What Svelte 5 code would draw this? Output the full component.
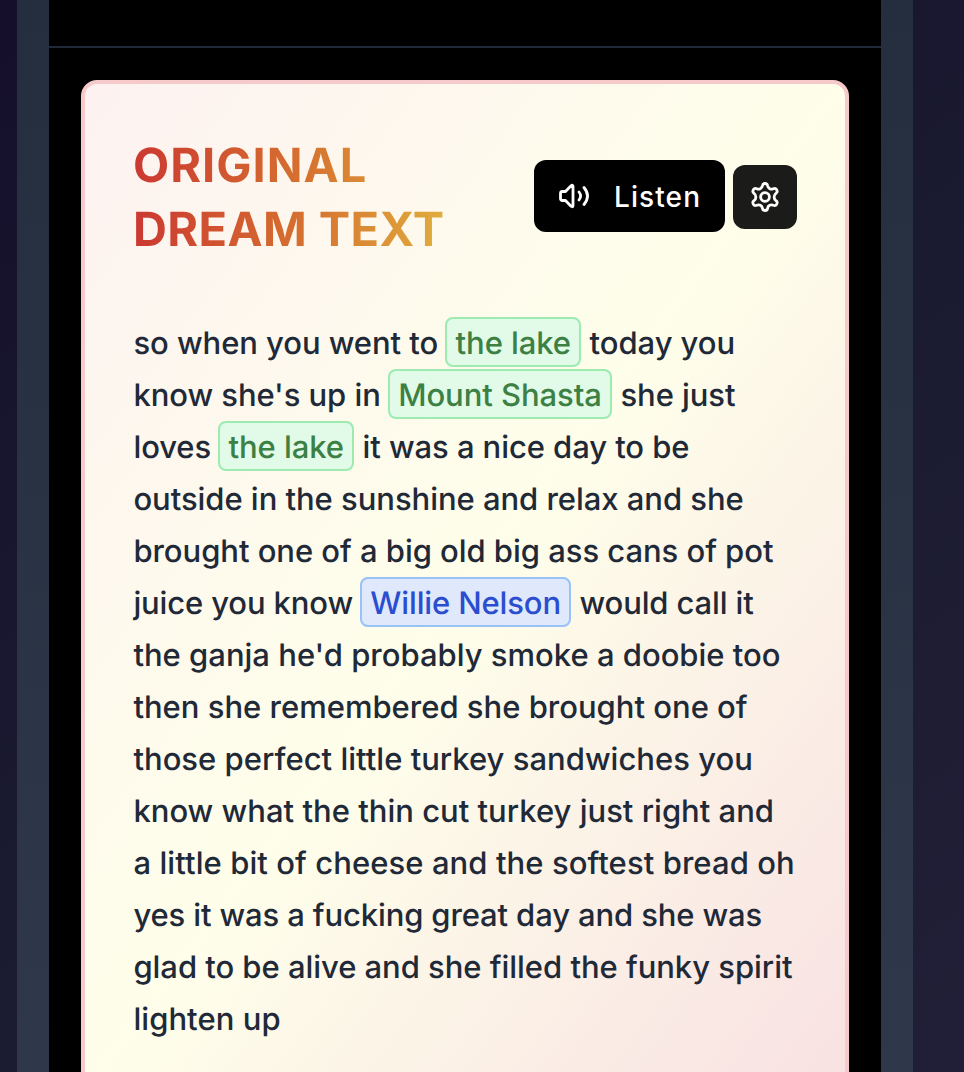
<script>
  // Each line carries its own tracking, in px.
  const lines = [
    { spacing: -0.06, parts: ['so when you went to ', { place: 'the lake' }, ' today you'] },
    { spacing: -0.06, parts: ["know she's up in ", { place: 'Mount Shasta' }, ' she just'] },
    { spacing: -0.07, parts: ['loves ', { place: 'the lake' }, ' it was a nice day to be'] },
    { spacing: -0.04, parts: ['outside in the sunshine and relax and she'] },
    { spacing: -0.04, parts: ['brought one of a big old big ass cans of pot'] },
    { spacing: -0.13, parts: ['juice you know ', { person: 'Willie Nelson' }, ' would call it'] },
    { spacing: 0, parts: ["the ganja he'd probably smoke a doobie too"] },
    { spacing: 0, parts: ['then she remembered she brought one of'] },
    { spacing: 0.01, parts: ['those perfect little turkey sandwiches you'] },
    { spacing: 0.01, parts: ['know what the thin cut turkey just right and'] },
    { spacing: 0.08, parts: ['a little bit of cheese and the softest bread oh'] },
    { spacing: -0.13, parts: ['yes it was a fucking great day and she was'] },
    { spacing: -0.04, parts: ['glad to be alive and she filled the funky spirit'] },
    { spacing: 0.06, parts: ['lighten up'] }
  ];
</script>

<div class="page">
  <div class="frame">
    <div class="panel">
      <header class="topbar"></header>
      <article class="card">
        <div class="head">
          <h1><span class="first">ORIGINAL</span><span class="second">DREAM TEXT</span></h1>
          <div class="actions">
            <button class="listen">
              <svg width="32" height="32" viewBox="0 0 32 32" fill="none" stroke="currentColor" stroke-width="2.8" stroke-linecap="round" stroke-linejoin="round">
                <path d="M2.500 13.500Q2.500 11.500 4.500 11.500H7.500L13 5.800Q15 4.400 15 6.500V25.500Q15 27.600 13 26.200L7.500 20.500H4.500Q2.500 20.500 2.500 18.500Z" />
                <path d="M21 12q3.200 4 0 8M26 7.500q7 8.500 0 17" />
              </svg>
              <span>Listen</span>
            </button>
            <button class="gear" aria-label="Settings">
              <svg width="32" height="32" viewBox="-16 -16 32 32" fill="none" stroke="currentColor" stroke-width="2.800" stroke-linecap="round" stroke-linejoin="round">
                <path d="M-2.600 -11.200Q-2.300 -13.500 0 -13.500Q2.300 -13.500 2.600 -11.200C3 -8.600 5.800 -7.200 8.300 -8.300Q10.500 -9.200 11.700 -7.200Q12.900 -5 11 -3.700C8.500 -1.900 8.500 1.900 11 3.700Q12.900 5 11.700 7.200Q10.500 9.200 8.300 8.300C5.800 7.200 3 8.600 2.600 11.200Q2.300 13.500 0 13.500Q-2.300 13.500 -2.600 11.200C-3 8.600 -5.800 7.200 -8.300 8.300Q-10.500 9.200 -11.700 7.200Q-12.900 5 -11 3.700C-8.500 1.900 -8.500 -1.900 -11 -3.700Q-12.900 -5 -11.700 -7.200Q-10.500 -9.200 -8.300 -8.300C-5.800 -7.200 -3 -8.600 -2.600 -11.200Z" />
                <circle r="4.400" />
              </svg>
            </button>
          </div>
        </div>
        <div class="dream">
          {#each lines as line}
            <p style:letter-spacing="{line.spacing}px">{#each line.parts as part}{#if typeof part === 'string'}{part}{:else if part.place}<mark class="place">{part.place}</mark>{:else}<mark class="person">{part.person}</mark>{/if}{/each}</p>
          {/each}
        </div>
      </article>
    </div>
  </div>
</div>

<style>
  :global(body) { margin: 0; }
  .page {
    box-sizing: border-box;
    height: 1072px;
    overflow: hidden;
    padding: 0 51px 0 17px;
    background: linear-gradient(145deg, #150f2b, #1a1a31 50%, #211f37);
    font-family: Inter, "Liberation Sans", sans-serif;
    text-rendering: geometricPrecision;
  }
  .frame {
    height: 1072px;
    padding: 0 32px;
    background: linear-gradient(#242e3e, #2e384a);
  }
  .panel { height: 1072px; background: #000; }
  .topbar { height: 46px; border-bottom: 2px solid #1f2937; }
  .card {
    box-sizing: border-box;
    height: 1018px;
    margin: 32px 32px 0;
    padding: 48px;
    border: 4px solid #f6caca;
    border-radius: 16px;
    background: linear-gradient(to bottom right, #fdf2f1, #fefeea 50%, #f8e1e2);
  }
  .head { display: flex; justify-content: space-between; align-items: center; height: 128px; }
  h1 {
    margin: 0;
    padding-top: 4px;
    font-size: 47px;
    line-height: 64px;
    font-weight: 700;
    background: linear-gradient(to right, #cb3831, #d6712f 55%, #e0ad3d);
    background-clip: text;
    -webkit-background-clip: text;
    color: transparent;
  }
  h1 span { display: block; white-space: nowrap; }
  .first { letter-spacing: 1px; }
  .second { letter-spacing: 0.4px; }
  .actions { display: flex; align-items: center; gap: 8px; }
  button { box-sizing: border-box; border: 0; padding: 0; color: #fff; font-family: inherit; display: flex; align-items: center; }
  .listen { width: 191px; height: 72px; padding-left: 24px; gap: 24px; border-radius: 12px; background: #000; font-size: 28px; font-weight: 500; letter-spacing: 1.1px; }
  .listen span { padding-top: 1px; }
  .gear { width: 64px; height: 64px; margin-top: 2px; justify-content: center; border-radius: 12px; background: #1b1b19; }
  .dream { margin-top: 58px; padding-left: 0.4px; font-size: 31px; font-weight: 500; color: #1f2937; }
  p { margin: 0; height: 52px; line-height: 52px; white-space: pre; }
  mark { margin-left: -1.2px; padding: 6px 8.4px 3px; border: 2px solid; border-radius: 8px; }
  .place { color: #3c8044; background: #e2fae8; border-color: #9eebb2; }
  .person { color: #2b4dd0; background: #dfe9fb; border-color: #99c2f7; }
</style>
